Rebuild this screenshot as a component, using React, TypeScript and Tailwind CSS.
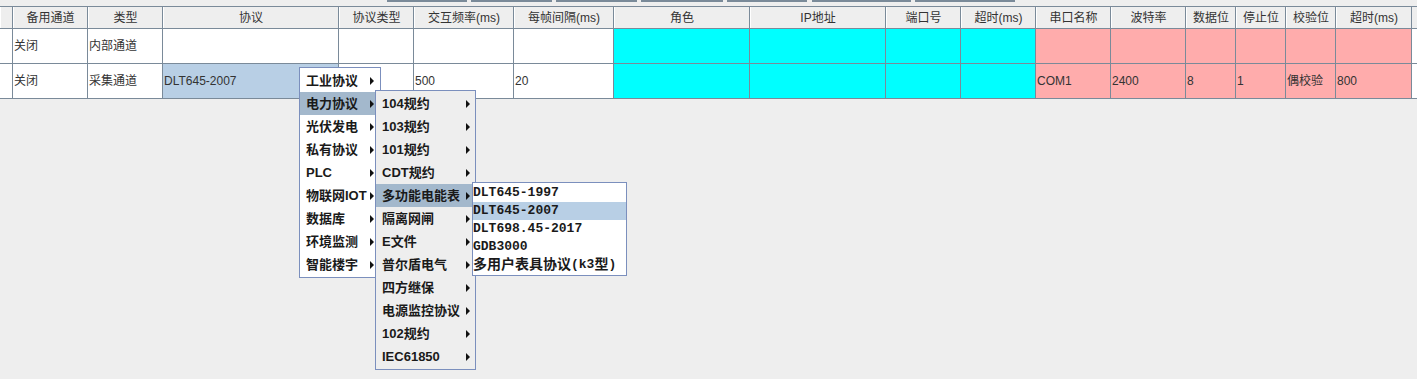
import React from 'react';

const cols = [
    { w: 'w-[13px]', title: '' },
    { w: 'w-[75px]', title: '备用通道' },
    { w: 'w-[75px]', title: '类型' },
    { w: 'w-[176px]', title: '协议' },
    { w: 'w-[75px]', title: '协议类型' },
    { w: 'w-[100px]', title: '交互频率(ms)' },
    { w: 'w-[100px]', title: '每帧间隔(ms)' },
    { w: 'w-[136px]', title: '角色' },
    { w: 'w-[136px]', title: 'IP地址' },
    { w: 'w-[75px]', title: '端口号' },
    { w: 'w-[75px]', title: '超时(ms)' },
    { w: 'w-[75px]', title: '串口名称' },
    { w: 'w-[75px]', title: '波特率' },
    { w: 'w-[50px]', title: '数据位' },
    { w: 'w-[50px]', title: '停止位' },
    { w: 'w-[50px]', title: '校验位' },
    { w: 'w-[76px]', title: '超时(ms)' },
];

const rows = [
    ['', '关闭', '内部通道', '', '', '', '', '', '', '', '', '', '', '', '', '', ''],
    ['', '关闭', '采集通道', 'DLT645-2007', '', '500', '20', '', '', '', '', 'COM1', '2400', '8', '1', '偶校验', '800'],
];

// bottoms of the toolbar buttons cut off at the top
const toolbar = [
    { ml: 'ml-[387px]', w: 'w-[80px]' },
    { ml: 'ml-[4px]', w: 'w-[81px]' },
    { ml: 'ml-[4px]', w: 'w-[81px]' },
    { ml: 'ml-[4px]', w: 'w-[82px]' },
    { ml: 'ml-[4px]', w: 'w-[80px]' },
    { ml: 'ml-[5px]', w: 'w-[99px]' },
    { ml: 'ml-[4px]', w: 'w-[100px]' },
];

const menu1 = ['工业协议', '电力协议', '光伏发电', '私有协议', 'PLC', '物联网IOT', '数据库', '环境监测', '智能楼宇'];
const menu2 = ['104规约', '103规约', '101规约', 'CDT规约', '多功能电能表', '隔离网闸', 'E文件', '普尔盾电气', '四方继保', '电源监控协议', '102规约', 'IEC61850'];

const cellBg = (row: number, col: number) => {
    if (row === 1 && col === 3) return 'bg-[#b8cfe5]';
    if (col >= 7 && col <= 10) return 'bg-[#00ffff]';
    if (col >= 11) return 'bg-[#ffacac]';
    return 'bg-white';
};

const Arrow = () => (
    <span className="block w-0 h-0 border-y-[4px] border-y-transparent border-l-[4px] border-l-[#111]" />
);

const App = () => {
    return (
        <div className="relative w-[1417px] h-[379px] bg-[#eeeeee] overflow-hidden font-['Liberation_Sans','Noto_Sans_CJK_SC',sans-serif] text-[12px] text-[#333]">
            {/* toolbar remains */}
            <div className="flex h-[6px]">
                {toolbar.map((b, i) => (
                    <div key={i} className={`${b.ml} ${b.w} h-[2px] bg-[#7a8a99]`} />
                ))}
            </div>

            {/* header */}
            <div className="flex h-[21px] box-content border-y border-[#7a8a99] bg-[#eeeeee]">
                {cols.map((c, i) => (
                    <div
                        key={i}
                        className={`${c.w} shrink-0 h-full flex items-center justify-center border-r border-[#7a8a99] border-l border-l-white`}
                    >
                        {c.title}
                    </div>
                ))}
                <div className="flex-1" />
            </div>

            {/* rows */}
            {rows.map((r, ri) => (
                <div key={ri} className="flex h-[35px] border-b border-[#7a8a99] bg-white">
                    {cols.map((c, ci) => (
                        <div
                            key={ci}
                            className={`${c.w} shrink-0 h-full flex items-center pl-[1px] border-r border-[#7a8a99] ${cellBg(ri, ci)}`}
                        >
                            {r[ci]}
                        </div>
                    ))}
                    <div className="flex-1" />
                </div>
            ))}

            {/* popup menus */}
            <div className="absolute left-[299px] top-[67px] w-[82px] border border-[#7b8fbd] bg-white py-[1px] z-10 font-bold text-[13px] text-[#1a1a1a]">
                {menu1.map((m, i) => (
                    <div
                        key={m}
                        className={`h-[23px] flex items-center justify-between pl-[6px] pr-[6px] ${i === 1 ? 'bg-[#a3b8cc]' : ''}`}
                    >
                        <span>{m}</span>
                        <Arrow />
                    </div>
                ))}
            </div>

            <div className="absolute left-[375px] top-[90px] w-[101px] border border-[#7b8fbd] bg-[#eeeeee] py-[1px] z-20 font-bold text-[13px] text-[#1a1a1a]">
                {menu2.map((m, i) => (
                    <div
                        key={m}
                        className={`h-[23px] flex items-center justify-between pl-[6px] pr-[5px] ${i === 4 ? 'bg-[#a3b8cc]' : ''}`}
                    >
                        <span>{m}</span>
                        <Arrow />
                    </div>
                ))}
            </div>

            <div className="absolute left-[472px] top-[182px] w-[155px] border border-[#7b8fbd] bg-white py-[1px] z-30 font-bold font-['Liberation_Mono','Noto_Sans_CJK_SC',monospace] text-[13px] text-[#1a1a1a]">
                <div className="h-[18px] flex items-center">DLT645-1997</div>
                <div className="h-[18px] flex items-center bg-[#b8cfe5]">DLT645-2007</div>
                <div className="h-[18px] flex items-center">DLT698.45-2017</div>
                <div className="h-[18px] flex items-center">GDB3000</div>
                <div className="h-[18px] flex items-center">
                    <span className="text-[14px]">多用户表具协议</span>(k3<span className="text-[14px]">型</span>)
                </div>
            </div>
        </div>
    );
};

export default App;
